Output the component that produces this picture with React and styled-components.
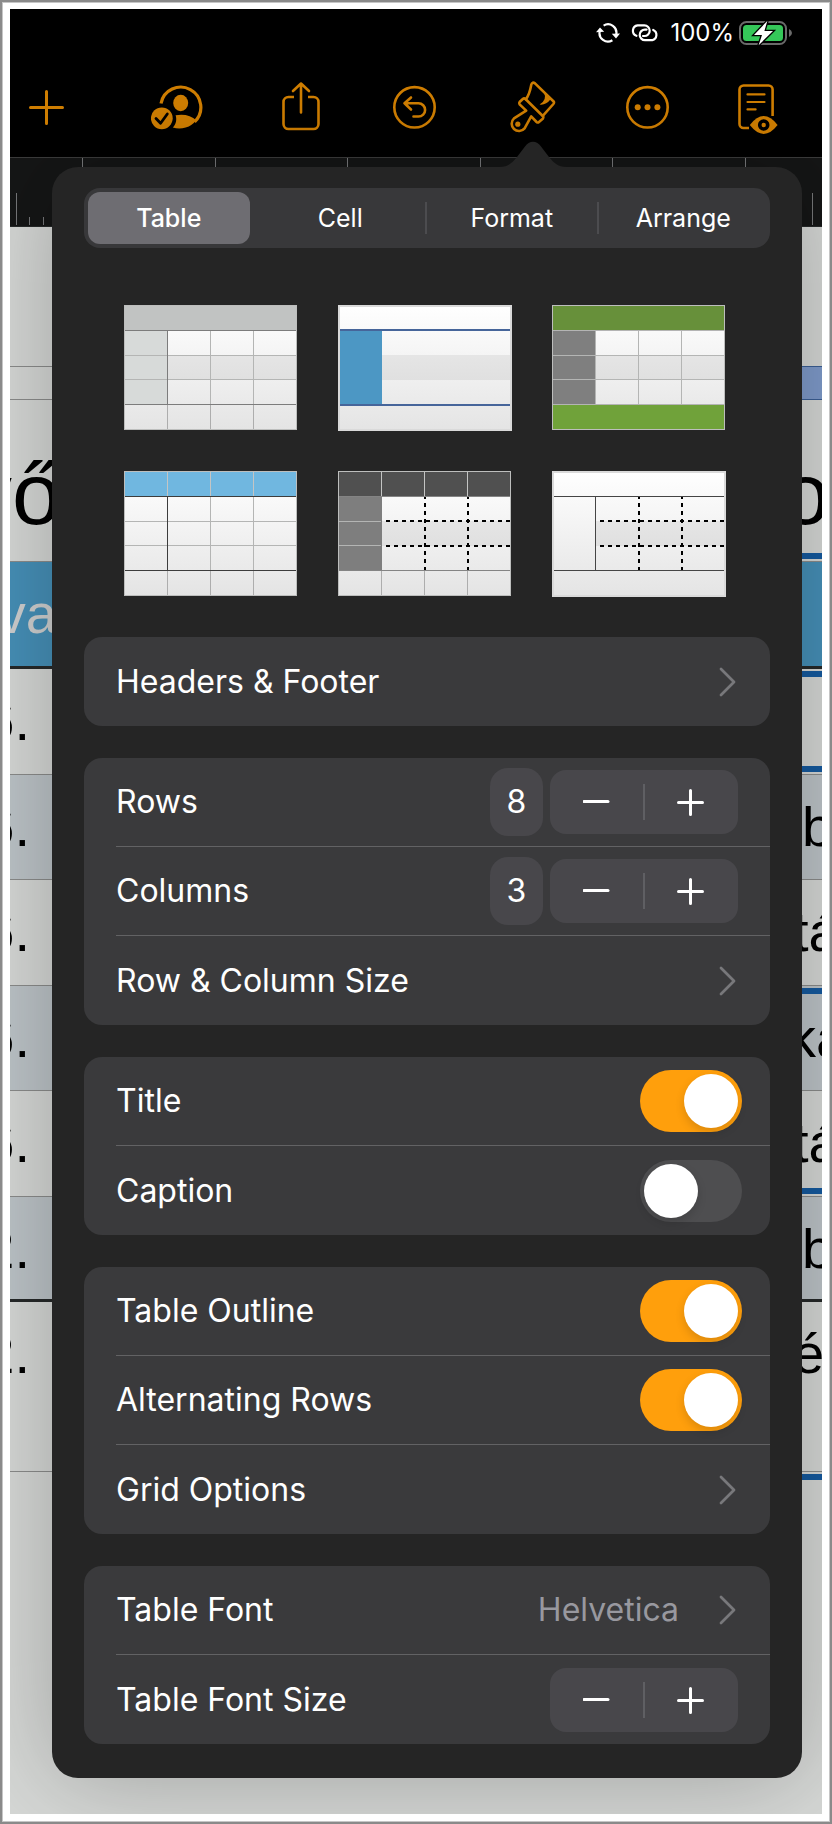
import { useState } from "react";
import styled, { createGlobalStyle } from "styled-components";

const GlobalStyle = createGlobalStyle`
  * {
    box-sizing: border-box;
  }
  body {
    margin: 0;
    background: #fff;
    font-family: Inter, "Liberation Sans", sans-serif;
  }
  button {
    font: inherit;
    color: inherit;
    background: none;
    border: 0;
    padding: 0;
    cursor: pointer;
  }
`;

const Frame = styled.div`
  display: flex;
  min-height: 100vh;
  padding: 9px 10px 10px;
  background: #fff;
  box-shadow: inset 0 0 0 2px #8a8a8a, inset 0 0 0 3px #c6c6c6;
`;

const Screen = styled.div`
  flex: 1;
  min-width: 0;
  display: grid;
  overflow: hidden;
  background: #d6d8d6;
`;

const Workspace = styled.div`
  grid-area: 1 / 1;
  min-width: 0;
  display: flex;
  flex-direction: column;
`;

const StatusBar = styled.div`
  display: flex;
  align-items: center;
  justify-content: flex-end;
  height: 48px;
  padding-right: 30px;
  background: #000;
  color: #fff;
`;

const StatusIcons = styled.div`
  display: flex;
  gap: 11px;
  margin-right: 11px;
`;

const Percent = styled.span`
  font-size: 24px;
  line-height: 28px;
  margin-right: 5px;
`;

const Toolbar = styled.div`
  display: grid;
  grid-template-columns: 122fr 131fr 111fr 117fr 116fr 112fr 84fr;
  align-items: center;
  height: 100px;
  padding-left: 19px;
  background: #000;
  color: #d17f02;
`;

const ToolButton = styled.button`
  justify-self: start;
  height: 56px;
  svg {
    display: block;
  }
`;

const Ruler = styled.div`
  display: flex;
  flex-direction: column;
  justify-content: space-between;
  height: 70px;
  border-top: 1px solid #3c3c3c;
  border-bottom: 1px solid #262929;
  background: #151616;
`;

const Ticks = styled.div`
  display: flex;
  justify-content: space-between;
  align-items: ${(p) => (p.$top ? "flex-start" : "flex-end")};
  padding: ${(p) => (p.$top ? "0 76px 0 72px" : "0 9px 1px 6px")};
`;

const Tick = styled.span`
  width: 1px;
  height: ${(p) => (p.$tall ? 32 : 8)}px;
  background: #77787a;
`;

const Sheet = styled.div`
  font-family: "Liberation Sans", Arial, sans-serif;
  font-size: 56px;
  line-height: 64px;
  color: #000;
  padding-top: 139px;
`;

const ColumnBar = styled.div`
  display: flex;
  justify-content: flex-end;
  height: 34px;
  border: solid #8b8c8b;
  border-width: 1px 0;
`;

const ColumnHandle = styled.span`
  width: 160px;
  margin: -1px 0;
  border: solid #3b5f95;
  border-width: 1px 0;
  background: #7f9bcb;
`;

const SheetRow = styled.div`
  position: relative;
  display: flex;
  justify-content: space-between;
  padding-top: 20px;
  background: ${(p) => (p.$alt ? "#bdc4c8" : "transparent")};
  border-bottom: ${(p) => (p.$thick ? "3px solid #262929" : "1px solid #8b8c8b")};
`;

const TitleRow = styled(SheetRow)`
  height: 162px;
  padding-top: 44px;
  font-size: 88px;
  line-height: 100px;
`;

const HeaderRow = styled(SheetRow)`
  height: 107px;
  background: #4690b8;
  color: #cfd0d0;
`;

const BodyRows = styled.div`
  display: grid;
  grid-template-rows: repeat(6, 1fr);
  height: 633px;
`;

const LastRow = styled(SheetRow)`
  height: 170px;
`;

const Leading = styled.span`
  display: flex;
  justify-content: flex-end;
  width: ${(p) => p.$width}px;
  white-space: nowrap;
`;

const Trailing = styled.span`
  width: ${(p) => p.$width}px;
  white-space: nowrap;
`;

const Marker = styled.span`
  position: absolute;
  right: 0;
  ${(p) => p.$edge}: 2px;
  width: 160px;
  height: 6px;
  background: #155a9f;
`;

const SheetEnd = styled.div`
  position: relative;
  height: 40px;
`;

const Popover = styled.section`
  grid-area: 1 / 1;
  align-self: start;
  position: relative;
  min-width: 0;
  margin: 158px 20px 36px 42px;
  padding: 21px 32px 34px;
  border-radius: 26px;
  background: #252525;
  color: #fff;
  box-shadow: 0 0 100px rgba(0, 0, 0, 0.26);
`;

const Pointer = styled.svg`
  position: absolute;
  left: 443px;
  bottom: 100%;
`;

const Segments = styled.div`
  display: grid;
  grid-template-columns: repeat(4, 1fr);
  height: 60px;
  border-radius: 16px;
  background: #38383a;
`;

const Segment = styled.div`
  display: flex;
  padding: 4px 6px 4px 4px;
  background: ${(p) =>
    p.$divided ? "linear-gradient(#4c4c4f, #4c4c4f) right center / 2px 32px no-repeat" : "none"};
`;

const SegmentButton = styled.button`
  flex: 1;
  border-radius: 12px;
  font-size: 25px;
  font-weight: ${(p) => (p.$active ? 500 : 400)};
  background: ${(p) => (p.$active ? "#6e6d72" : "none")};
`;

const Styles = styled.div`
  display: flex;
  flex-wrap: wrap;
  justify-content: space-between;
  row-gap: 40px;
  padding: 57px 44px 40px 40px;
`;

const StyleButton = styled.button`
  height: 126px;
  svg {
    display: block;
  }
`;

const Card = styled.div`
  display: flex;
  flex-direction: column;
  padding-left: 32px;
  border-radius: 18px;
  background: #3a3a3c;
  & + & {
    margin-top: 32px;
  }
`;

const Row = styled.div`
  display: flex;
  align-items: center;
  height: 89px;
  padding-right: ${(p) => p.$end || 32}px;
  font-size: 32px;
  line-height: 40px;
  &:not(:last-child) {
    border-bottom: 1px solid #626264;
  }
`;

const RowLabel = styled.label`
  flex: 1;
  text-align: left;
`;

const RowValue = styled.span`
  margin-right: 40px;
  color: #98989f;
`;

const Count = styled.output`
  width: 53px;
  height: 68px;
  margin-right: 7px;
  border-radius: 18px;
  background: #48474b;
  line-height: 68px;
  text-align: center;
`;

const StepperBox = styled.div`
  display: flex;
  width: 188px;
  height: 64px;
  border-radius: 16px;
  background: linear-gradient(#5f5f63, #5f5f63) center / 2px 36px no-repeat #48474b;
`;

const StepButton = styled.button`
  flex: 1;
  display: flex;
  align-items: center;
  justify-content: center;
`;

const Switch = styled.input`
  appearance: none;
  width: 102px;
  height: 62px;
  margin: 0;
  padding: 4px;
  border-radius: 31px;
  background: #4e4e50;
  cursor: pointer;
  &::before {
    content: "";
    display: block;
    width: 54px;
    height: 54px;
    border-radius: 50%;
    background: #fff;
    box-shadow: 0 4px 10px rgba(0, 0, 0, 0.15);
  }
  &:checked {
    background: #ff9f0c;
  }
  &:checked::before {
    margin-left: 40px;
  }
`;

const ToolIcon = ({ width, children }) => (
  <svg
    width={width}
    height="56"
    viewBox={`0 0 ${width} 56`}
    fill="none"
    stroke="currentColor"
    strokeWidth="2.6"
    strokeLinecap="round"
    strokeLinejoin="round"
    aria-hidden="true"
  >
    {children}
  </svg>
);

const tools = [
  {
    name: "Insert",
    width: 35,
    art: <path d="M17.5 12.5v32M1.5 28.5h32" strokeWidth="3" />,
  },
  {
    name: "Collaborate",
    width: 52,
    art: (
      <>
        <path d="M10 24.5A20.1 20.1 0 1 1 43.6 42.8" strokeWidth="3.2" strokeLinecap="butt" />
        <g fill="currentColor" stroke="none">
          <ellipse cx="29.7" cy="24" rx="7.5" ry="8.2" />
          <path d="M24.6 36.2C33 34.6 40.5 36.6 45.3 41.2A21.7 21.7 0 0 1 21.8 48.6C25.2 45 26 40.5 24.6 36.2Z" />
          <circle cx="10.8" cy="39.3" r="10.9" />
        </g>
        <path d="M5 39.5L9.6 44.3L16.3 35" stroke="#000" strokeWidth="2.8" />
      </>
    ),
  },
  {
    name: "Share",
    width: 38,
    art: (
      <>
        <path d="M12 18H6.5a5 5 0 0 0-5 5v22a5 5 0 0 0 5 5h25a5 5 0 0 0 5-5V23a5 5 0 0 0-5-5H26" strokeLinecap="butt" />
        <path d="M19 4.5V33.5M11 12L19 4.5L27 12" />
      </>
    ),
  },
  {
    name: "Undo",
    width: 43,
    art: (
      <>
        <circle cx="21.5" cy="28.3" r="20.2" />
        <path d="M18 18.5L11.5 24.3L18 30.5M11.5 24.3H25.5a6.6 6.6 0 0 1 0 13.2H20.5" />
      </>
    ),
  },
  {
    name: "Format",
    width: 46,
    art: (
      <>
        <path d="M15.7 20.3C19.5 16 20.3 11 21.3 5.6Q22.4 2.4 25 4.4L43.4 22.2Q44.6 23.6 43.4 25L32.8 36.8" />
        <path d="M15.2 19.8Q14 19 12.8 20L9.6 23Q8.6 24.2 9.6 25.4L16.2 31.6L4 39.4A7.3 7.3 0 1 0 14.6 49.4L21.2 37.4L26.6 43Q27.8 44 29 43L33 39.6Q34 38.4 33 37.2Z" />
        <circle cx="7.8" cy="45.2" r="2.6" fill="currentColor" stroke="none" />
        <path d="M34 13.6Q37.4 21 29.6 25.6Q36 26.4 40.4 20.6Z" fill="currentColor" stroke="none" />
      </>
    ),
  },
  {
    name: "More",
    width: 43,
    art: (
      <>
        <circle cx="21.5" cy="28.3" r="20.2" />
        <g fill="currentColor" stroke="none">
          <circle cx="11.7" cy="28.3" r="3" />
          <circle cx="21.5" cy="28.3" r="3" />
          <circle cx="31.4" cy="28.3" r="3" />
        </g>
      </>
    ),
  },
  {
    name: "Reading view",
    width: 42,
    art: (
      <>
        <path d="M34.6 37V10.5a4 4 0 0 0-4-4H5.5a4 4 0 0 0-4 4V45a4 4 0 0 0 4 4H11" strokeLinecap="butt" />
        <path d="M9.5 15.4H26.5M9.5 23H26.5M9.5 30.4H17.6" strokeWidth="2.2" />
        <path d="M11.8 46Q25.7 28.2 39.6 46Q25.7 63.8 11.8 46Z" fill="currentColor" stroke="none" />
        <circle cx="25.7" cy="46" r="4" stroke="#000" strokeWidth="3.6" />
      </>
    ),
  },
];

const SyncIcon = () => (
  <svg width="24" height="20" viewBox="0 0 24 20" fill="none" stroke="#fff" strokeWidth="2.2" aria-hidden="true">
    <path d="M7.6 2.6A8.4 8.4 0 0 1 20.2 11.6" />
    <path d="M3.8 8A8.4 8.4 0 0 0 16.4 17.2" />
    <path d="M0 9.2L4 4.6L8.2 8.8ZM15.8 10.8L24 10.6L20 15.4Z" fill="#fff" stroke="none" />
  </svg>
);

const LinkIcon = () => (
  <svg width="28" height="20" viewBox="0 0 28 20" fill="none" stroke="#fff" strokeWidth="2.2" strokeLinecap="round" aria-hidden="true">
    <path d="M5.4 12.8A5.4 5.4 0 0 1 6.6 2.4H13.4A5.3 5.3 0 0 1 13.4 13H12" />
    <path d="M22.2 7A5.4 5.4 0 0 1 21.2 17.2H14A5.3 5.3 0 0 1 14 6.6H15.6" />
  </svg>
);

const BatteryIcon = () => (
  <svg width="53" height="26" viewBox="0 0 53 26" role="img" aria-label="Charging">
    <rect x="1" y="2" width="46" height="22" rx="6.5" fill="none" stroke="#6a6a6a" strokeWidth="2" />
    <rect x="4" y="5" width="40" height="16" rx="3.5" fill="#35c759" />
    <path d="M50 9Q53 10.5 53 13T50 17Z" fill="#6a6a6a" />
    <path d="M28.4 .8L15 15H23L19.6 25.2L34 11H25.4Z" fill="#fff" stroke="#000" strokeWidth="2.6" paintOrder="stroke" />
  </svg>
);

const Chevron = () => (
  <svg width="17" height="30" viewBox="0 0 17 30" fill="none" stroke="#78787b" strokeWidth="2.8" strokeLinecap="round" strokeLinejoin="round" aria-hidden="true">
    <path d="M2 2L15 15L2 28" />
  </svg>
);

const tableStyles = [
  { header: "#c1c3c2", side: "#d7dad9", rule: "#7c7c7c", grid: true, sideRule: true, footerCols: true, banded: true },
  { side: "#4c97c4", rule: "#46659a", thickRule: true, framed: true, banded: true },
  { header: "#67903a", side: "#7f7f7f", footer: "#70a23a", rule: "#b4b4b4", grid: true, banded: true },
  { header: "#70b7e0", rule: "#3c3c3c", grid: true, sideRule: true, headerCols: true, footerCols: true },
  { header: "#505050", side: "#7e7e7e", rule: "#848484", dashed: true, headerCols: true, footerCols: true, banded: true },
  { rule: "#454545", dashed: true, framed: true, sideRule: true, banded: true },
];

const columns = [43, 86, 129];
const gridColor = "#b4b5b4";

const TableThumb = ({ look }) => {
  const frame = look.framed ? 2 : 1;
  const w = 172 + frame;
  const h = 124 + frame;
  const ruleHeight = look.thickRule ? 2 : 1;
  return (
    <svg width="174" height="126" viewBox="0 0 174 126" shapeRendering="crispEdges" aria-hidden="true">
      <defs>
        <linearGradient id="paper" x1="0" y1="0" x2="0" y2="1">
          <stop offset="0" stopColor="#fff" />
          <stop offset="1" stopColor="#e4e4e4" />
        </linearGradient>
      </defs>
      <rect width={w} height={h} fill="url(#paper)" />
      {look.banded && <rect x="44" y="50" width="128" height="25" fill="#000" opacity="0.06" />}
      {look.header && <rect width="172" height="25" fill={look.header} />}
      {look.footer && <rect y="100" width="172" height="25" fill={look.footer} />}
      {look.side && <rect y="25" width="44" height="75" fill={look.side} />}
      {look.grid && <path d="M0 50.5H172M0 74.5H172M43.5 26V99M86.5 26V99M129.5 26V99" stroke={gridColor} />}
      {look.dashed && look.side && <path d="M0 50.5H43M0 74.5H43" stroke={gridColor} />}
      {look.headerCols && columns.map((x) => <rect key={x} x={x} width="1" height="25" fill="#c4c5c4" />)}
      {look.footerCols && columns.map((x) => <rect key={x} x={x} y="100" width="1" height="25" fill="#adadad" />)}
      {look.dashed && (
        <>
          <path d="M48 50H172M48 75H172" stroke="#000" strokeWidth="2" strokeDasharray="4 4" />
          <path d="M87 26V99M130 26V99" stroke="#000" strokeWidth="2" strokeDasharray="4 4" strokeDashoffset="2" />
        </>
      )}
      {look.sideRule && <rect x="43" y="25" width="1" height="75" fill={look.rule} />}
      <rect y={26 - ruleHeight} width="172" height={ruleHeight} fill={look.rule} />
      <rect y="99" width="172" height={ruleHeight} fill={look.rule} />
      <rect
        x={frame / 2}
        y={frame / 2}
        width={w - frame}
        height={h - frame}
        fill="none"
        stroke={look.framed ? "#dadada" : "#bdbebd"}
        strokeWidth={frame}
      />
    </svg>
  );
};

const sheetRows = [
  { day: "6.", marks: ["top", "bottom"] },
  { day: "6.", text: "b", width: 20, alt: true },
  { day: "6.", text: "tá", width: 29 },
  { day: "6.", text: "ka", width: 34, alt: true, marks: ["top"] },
  { day: "6.", text: "tá", width: 29, marks: ["bottom"] },
  { day: "2.", text: "b", width: 20, alt: true, thick: true },
];

const Stepper = ({ label, onStep }) => (
  <StepperBox role="group" aria-label={label}>
    <StepButton aria-label={`Decrease ${label}`} onClick={() => onStep(-1)}>
      <svg width="28" height="28" viewBox="0 0 28 28" stroke="#fff" strokeWidth="3" strokeLinecap="round">
        <path d="M1 13.5H25" />
      </svg>
    </StepButton>
    <StepButton aria-label={`Increase ${label}`} onClick={() => onStep(1)}>
      <svg width="28" height="28" viewBox="0 0 28 28" stroke="#fff" strokeWidth="3" strokeLinecap="round">
        <path d="M1.5 14.5H25.5M13.5 2.5V26.5" />
      </svg>
    </StepButton>
  </StepperBox>
);

const LinkRow = ({ label, value }) => (
  <Row as="button" $end={34}>
    <RowLabel as="span">{label}</RowLabel>
    {value && <RowValue>{value}</RowValue>}
    <Chevron />
  </Row>
);

const CountRow = ({ label, initial }) => {
  const [count, setCount] = useState(initial);
  return (
    <Row>
      <RowLabel as="span">{label}</RowLabel>
      <Count>{count}</Count>
      <Stepper label={label} onStep={(n) => setCount(Math.max(1, count + n))} />
    </Row>
  );
};

const SwitchRow = ({ id, label, on }) => (
  <Row $end={28}>
    <RowLabel htmlFor={id}>{label}</RowLabel>
    <Switch id={id} type="checkbox" role="switch" defaultChecked={on} />
  </Row>
);

const FontSizeRow = () => {
  const [, setSize] = useState(0);
  return (
    <Row>
      <RowLabel as="span">Table Font Size</RowLabel>
      <Stepper label="Table Font Size" onStep={(n) => setSize((s) => s + n)} />
    </Row>
  );
};

const Spreadsheet = () => (
  <Sheet>
    <ColumnBar>
      <ColumnHandle />
    </ColumnBar>
    <TitleRow>
      <Leading $width={51}>vő</Leading>
      <Trailing $width={41}>o</Trailing>
      <Marker $edge="bottom" />
    </TitleRow>
    <HeaderRow $thick>
      <Leading $width={47}>va</Leading>
    </HeaderRow>
    <BodyRows>
      {sheetRows.map((row, i) => (
        <SheetRow key={i} $alt={row.alt} $thick={row.thick}>
          <Leading $width={20}>{row.day}</Leading>
          {row.text && <Trailing $width={row.width}>{row.text}</Trailing>}
          {row.marks && row.marks.map((edge) => <Marker key={edge} $edge={edge} />)}
        </SheetRow>
      ))}
    </BodyRows>
    <LastRow>
      <Leading $width={20}>2.</Leading>
      <Trailing $width={29}>é</Trailing>
    </LastRow>
    <SheetEnd>
      <Marker $edge="top" />
    </SheetEnd>
  </Sheet>
);

const tabs = ["Table", "Cell", "Format", "Arrange"];

const App = () => {
  const [tab, setTab] = useState("Table");

  return (
    <Frame>
      <GlobalStyle />
      <Screen>
        <Workspace>
          <StatusBar>
            <StatusIcons>
              <SyncIcon />
              <LinkIcon />
            </StatusIcons>
            <Percent>100%</Percent>
            <BatteryIcon />
          </StatusBar>
          <Toolbar>
            {tools.map((tool) => (
              <ToolButton key={tool.name} aria-label={tool.name}>
                <ToolIcon width={tool.width}>{tool.art}</ToolIcon>
              </ToolButton>
            ))}
          </Toolbar>
          <Ruler>
            <Ticks $top>
              {Array.from({ length: 6 }, (_, i) => (
                <Tick key={i} $tall />
              ))}
            </Ticks>
            <Ticks>
              {Array.from({ length: 61 }, (_, i) => (
                <Tick key={i} $tall={i % 10 === 0} />
              ))}
            </Ticks>
          </Ruler>
          <Spreadsheet />
        </Workspace>

        <Popover>
          <Pointer width="76" height="26" viewBox="0 0 76 26" aria-hidden="true">
            <path d="M4 26C14 26 17 21.5 22 16L30 5.5C34 -.8 42 -.8 46 5.5L54 16C59 21.5 62 26 72 26Z" fill="#252525" />
          </Pointer>
          <Segments role="tablist">
            {tabs.map((name, i) => (
              <Segment key={name} $divided={i === 1 || i === 2}>
                <SegmentButton role="tab" aria-selected={tab === name} $active={tab === name} onClick={() => setTab(name)}>
                  {name}
                </SegmentButton>
              </Segment>
            ))}
          </Segments>
          <Styles>
            {tableStyles.map((look, i) => (
              <StyleButton key={i} aria-label={`Table style ${i + 1}`}>
                <TableThumb look={look} />
              </StyleButton>
            ))}
          </Styles>
          <Card>
            <LinkRow label="Headers &amp; Footer" />
          </Card>
          <Card>
            <CountRow label="Rows" initial={8} />
            <CountRow label="Columns" initial={3} />
            <LinkRow label="Row &amp; Column Size" />
          </Card>
          <Card>
            <SwitchRow id="title" label="Title" on />
            <SwitchRow id="caption" label="Caption" />
          </Card>
          <Card>
            <SwitchRow id="outline" label="Table Outline" on />
            <SwitchRow id="alternating" label="Alternating Rows" on />
            <LinkRow label="Grid Options" />
          </Card>
          <Card>
            <LinkRow label="Table Font" value="Helvetica" />
            <FontSizeRow />
          </Card>
        </Popover>
      </Screen>
    </Frame>
  );
};

export default App;
